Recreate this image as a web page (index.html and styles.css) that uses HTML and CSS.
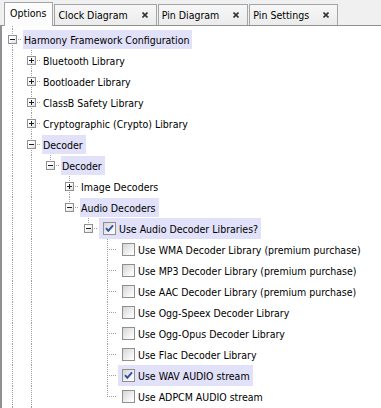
FILE: index.html
```html
<!DOCTYPE html>
<html>
<head>
<meta charset="utf-8">
<link rel="stylesheet" href="styles.css">
</head>
<body>
<div class="window">
  <div class="tabbar">
    <div class="tab active">Options</div>
    <div class="tab">Clock Diagram<span class="x"><svg width="6" height="6" viewBox="0 0 6 6"><path d="M0.5 0.5L5.5 5.5M5.5 0.5L0.5 5.5" stroke="#333" stroke-width="1.6" fill="none"/></svg></span></div>
    <div class="tab">Pin Diagram<span class="x"><svg width="6" height="6" viewBox="0 0 6 6"><path d="M0.5 0.5L5.5 5.5M5.5 0.5L0.5 5.5" stroke="#333" stroke-width="1.6" fill="none"/></svg></span></div>
    <div class="tab">Pin Settings<span class="x"><svg width="6" height="6" viewBox="0 0 6 6"><path d="M0.5 0.5L5.5 5.5M5.5 0.5L0.5 5.5" stroke="#333" stroke-width="1.6" fill="none"/></svg></span></div>
  </div>
  <div class="panel">
    <div class="tree">
      <div class="row spacer"><span class="g line"></span></div>

      <div class="row"><span class="own"><span class="exp minus"></span></span><span class="lbl hl">Harmony Framework Configuration</span></div>
      <div class="row"><span class="g line"></span><span class="own"><span class="exp plus"></span></span><span class="lbl">Bluetooth Library</span></div>
      <div class="row"><span class="g line"></span><span class="own"><span class="exp plus"></span></span><span class="lbl">Bootloader Library</span></div>
      <div class="row"><span class="g line"></span><span class="own"><span class="exp plus"></span></span><span class="lbl">ClassB Safety Library</span></div>
      <div class="row"><span class="g line"></span><span class="own"><span class="exp plus"></span></span><span class="lbl">Cryptographic (Crypto) Library</span></div>
      <div class="row"><span class="g line"></span><span class="own"><span class="exp minus"></span></span><span class="lbl hl">Decoder</span></div>
      <div class="row"><span class="g line"></span><span class="g line"></span><span class="own last"><span class="exp minus"></span></span><span class="lbl hl">Decoder</span></div>
      <div class="row"><span class="g line"></span><span class="g line"></span><span class="g"></span><span class="own"><span class="exp plus"></span></span><span class="lbl">Image Decoders</span></div>
      <div class="row"><span class="g line"></span><span class="g line"></span><span class="g"></span><span class="own last"><span class="exp minus"></span></span><span class="lbl hl">Audio Decoders</span></div>
      <div class="row"><span class="g line"></span><span class="g line"></span><span class="g"></span><span class="g"></span><span class="own last"><span class="exp minus"></span></span><span class="lbl cb hl"><span class="box on"><svg width="11" height="11" viewBox="0 0 11 11"><path d="M2 5.2L4.3 7.8L9 2.3" stroke="#3050a8" stroke-width="2" fill="none"/></svg></span>Use Audio Decoder Libraries?</span></div>

      <div class="row"><span class="g line"></span><span class="g line"></span><span class="g"></span><span class="g"></span><span class="g"></span><span class="own"></span><span class="lbl cb"><span class="box"></span>Use WMA Decoder Library (premium purchase)</span></div>
      <div class="row"><span class="g line"></span><span class="g line"></span><span class="g"></span><span class="g"></span><span class="g"></span><span class="own"></span><span class="lbl cb"><span class="box"></span>Use MP3 Decoder Library (premium purchase)</span></div>
      <div class="row"><span class="g line"></span><span class="g line"></span><span class="g"></span><span class="g"></span><span class="g"></span><span class="own"></span><span class="lbl cb"><span class="box"></span>Use AAC Decoder Library (premium purchase)</span></div>
      <div class="row"><span class="g line"></span><span class="g line"></span><span class="g"></span><span class="g"></span><span class="g"></span><span class="own"></span><span class="lbl cb"><span class="box"></span>Use Ogg-Speex Decoder Library</span></div>
      <div class="row"><span class="g line"></span><span class="g line"></span><span class="g"></span><span class="g"></span><span class="g"></span><span class="own"></span><span class="lbl cb"><span class="box"></span>Use Ogg-Opus Decoder Library</span></div>
      <div class="row"><span class="g line"></span><span class="g line"></span><span class="g"></span><span class="g"></span><span class="g"></span><span class="own"></span><span class="lbl cb"><span class="box"></span>Use Flac Decoder Library</span></div>
      <div class="row"><span class="g line"></span><span class="g line"></span><span class="g"></span><span class="g"></span><span class="g"></span><span class="own"></span><span class="lbl cb hl"><span class="box on"><svg width="11" height="11" viewBox="0 0 11 11"><path d="M2 5.2L4.3 7.8L9 2.3" stroke="#3050a8" stroke-width="2" fill="none"/></svg></span>Use WAV AUDIO stream</span></div>
      <div class="row"><span class="g line"></span><span class="g line"></span><span class="g"></span><span class="g"></span><span class="g"></span><span class="own last"></span><span class="lbl cb"><span class="box"></span>Use ADPCM AUDIO stream</span></div>

      <div class="row"><span class="g line"></span><span class="own"><span class="exp plus"></span></span><span class="lbl hl next"></span></div>
    </div>
  </div>
</div>
</body>
</html>
```
FILE: styles.css
```css
* { box-sizing: border-box; margin: 0; padding: 0; }
html, body { width: 381px; height: 408px; overflow: hidden; background: #fff; }
body {
  font-family: "DejaVu Sans Condensed", "DejaVu Sans", sans-serif;
  font-stretch: condensed;
  font-size: 10.5px;
  color: #000;
}
.window { display: flex; flex-direction: column; height: 408px; }

.tabbar {
  height: 26px;
  flex: none;
  background: #f0f0f0;
  border-bottom: 1px solid #8e9094;
  display: flex;
  align-items: flex-end;
  padding-left: 4px;
}
.tab {
  height: 21px;
  display: flex;
  align-items: center;
  padding: 0 8px 1px 3px;
  border: 1px solid #a3a5a8;
  border-bottom: none;
  background: linear-gradient(#f7f7f7, #ebebeb);
  margin-left: 1px;
  white-space: nowrap;
}
.tab.active {
  height: 24px;
  margin-bottom: -1px;
  margin-left: 0;
  padding: 0 6px 4px 5px;
  background: #fcfcfc;
  position: relative;
}
.x { display: flex; margin-left: 14px; }

.panel {
  flex: 1;
  border-left: 2px solid #8e9094;
  background: #fff;
  overflow: hidden;
}
.tree { padding-left: 1px; }
.row { display: flex; align-items: center; height: 21px; white-space: nowrap; }
.row.spacer { height: 3px; }
.g, .own { width: 19px; height: 100%; position: relative; flex: none; }
.g.line::before, .own::before {
  content: "";
  position: absolute;
  left: 9px; top: 0;
  width: 1px; height: 100%;
  background: repeating-linear-gradient(to bottom, #a0a0a0 0 1px, transparent 1px 2px);
}
.own.last::before { height: 11px; }
.own::after {
  content: "";
  position: absolute;
  left: 10px; top: 10px;
  width: 9px; height: 1px;
  background: repeating-linear-gradient(to right, transparent 0 1px, #a0a0a0 1px 2px);
}
.exp {
  position: absolute;
  left: 5px; top: 6px;
  width: 9px; height: 9px;
  border: 1px solid #919191;
  background: linear-gradient(135deg, #ffffff 30%, #dedede);
  z-index: 1;
}
.exp::before {
  content: "";
  position: absolute;
  left: 1px; top: 3px;
  width: 5px; height: 1px;
  background: #1a1a2a;
}
.exp.plus::after {
  content: "";
  position: absolute;
  left: 3px; top: 1px;
  width: 1px; height: 5px;
  background: #1a1a2a;
}
.lbl {
  margin-left: 1px;
  height: 19px;
  display: flex;
  align-items: center;
  padding: 0 3px 0 1px;
}
.lbl.hl { background: #e1e1f9; }
.lbl.next { width: 35px; }
.lbl.cb { padding-left: 4px; height: 21px; }
.box {
  width: 13px; height: 13px;
  margin-right: 3px;
  border: 1px solid #8f8f8f;
  background: linear-gradient(135deg, #d4d4d4, #f6f6f6 70%, #ffffff);
  display: flex;
  align-items: center;
  justify-content: center;
  flex: none;
}
```
